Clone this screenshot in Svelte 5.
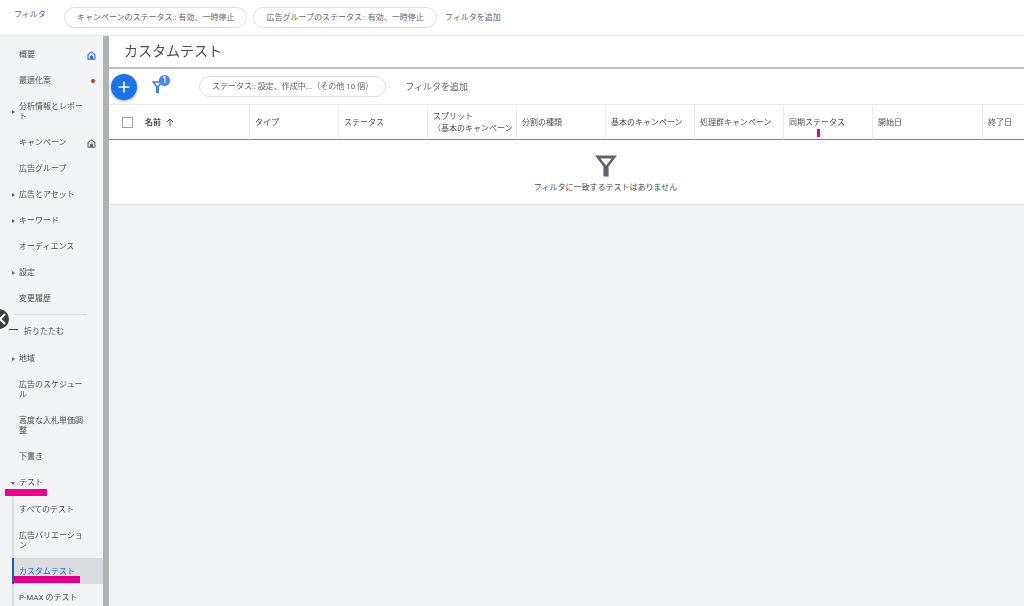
<script>
  const statusFilters = [
    'キャンペーンのステータス:: 有効、一時停止',
    '広告グループのステータス:: 有効、一時停止',
  ];

  const mainNav = [
    { label: '概要', icon: 'home', tone: 'blue' },
    { label: '最適化案', dot: true },
    { label: '分析情報とレポート', arrow: true },
    { label: 'キャンペーン', icon: 'home' },
    { label: '広告グループ' },
    { label: '広告とアセット', arrow: true },
    { label: 'キーワード', arrow: true },
    { label: 'オーディエンス' },
    { label: '設定', arrow: true },
    { label: '変更履歴' },
  ];

  const moreNav = [
    { label: '地域', arrow: true },
    { label: '広告のスケジュール' },
    { label: '高度な入札単価調整' },
    { label: '下書き' },
    { label: 'テスト', arrow: true, open: true, marked: true },
  ];

  const testNav = [
    { label: 'すべてのテスト' },
    { label: '広告バリエーション' },
    { label: 'カスタムテスト', active: true, marked: true },
    { label: 'P-MAX のテスト' },
  ];

  const columns = [
    { label: 'タイプ' },
    { label: 'ステータス' },
    { label: 'スプリット', sub: '（基本のキャンペーン' },
    { label: '分割の種類' },
    { label: '基本のキャンペーン' },
    { label: '処理群キャンペーン' },
    { label: '同期ステータス', marked: true },
    { label: '開始日', size: 'wide' },
    { label: '終了日', size: 'last' },
  ];

  let selectAll = $state(false);
</script>

{#snippet navItem(item)}
  <li>
    <a
      href="#top"
      class="nav-item"
      class:active={item.active}
      aria-current={item.active ? 'page' : undefined}
    >
      {#if item.arrow}
        <span class="arrow" class:open={item.open}></span>
      {/if}
      <span class="nav-label">{item.label}</span>
      {#if item.icon}
        <svg class="home {item.tone ?? ''}" viewBox="0 0 10 10" aria-hidden="true">
          <path d="M1.2 9.2V3.8L5 1l3.8 2.8v5.4z" fill="none" stroke="currentColor" stroke-width="1.2" stroke-linejoin="round" />
          <path d="M3.2 9V6.4a1.8 1.8 0 0 1 3.6 0V9z" fill="currentColor" />
        </svg>
      {/if}
      {#if item.dot}
        <span class="dot"></span>
      {/if}
      {#if item.marked}
        <span class="marker"></span>
      {/if}
    </a>
  </li>
{/snippet}

<div class="app">
  <header class="filter-bar">
    <span class="filter-title">フィルタ</span>
    {#each statusFilters as filter}
      <button class="chip">{filter}</button>
    {/each}
    <button class="add-filter">フィルタを追加</button>
  </header>

  <div class="body">
    <nav class="sidebar">
      <ul>
        {#each mainNav as item}
          {@render navItem(item)}
        {/each}
      </ul>
      <button class="fold"><span class="minus"></span>折りたたむ</button>
      <ul>
        {#each moreNav as item}
          {@render navItem(item)}
        {/each}
      </ul>
      <ul class="sub">
        {#each testNav as item}
          {@render navItem(item)}
        {/each}
      </ul>
      <button class="collapse" aria-label="メニューを閉じる">
        <svg viewBox="0 0 20 20" aria-hidden="true">
          <path d="M16 5l-5 5 5 5" fill="none" stroke="#fff" stroke-width="2" />
        </svg>
      </button>
    </nav>

    <main>
      <h1>カスタムテスト</h1>

      <div class="toolbar">
        <button class="fab" aria-label="作成">
          <svg viewBox="0 0 26 26" aria-hidden="true">
            <path d="M13 7.5v11M7.5 13h11" stroke="#fff" stroke-width="1.6" />
          </svg>
        </button>
        <button class="funnel-btn" aria-label="フィルタ">
          <svg viewBox="0 0 11 12" aria-hidden="true">
            <path d="M1.2 1h8.6L6.3 5.6v5.6H4.7V5.6z" fill="none" stroke="#3b78e7" stroke-width="1.4" />
          </svg>
          <span class="badge">1</span>
        </button>
        <button class="chip status-chip">ステータス:: 設定、作成中...（その他 10 個）</button>
        <button class="add-filter large">フィルタを追加</button>
      </div>

      <div class="table-wrap">
        <table>
          <thead>
            <tr>
              <th class="check">
                <input type="checkbox" aria-label="すべて選択" bind:checked={selectAll} />
              </th>
              <th class="name">
                名前
                <svg viewBox="0 0 8 8" aria-hidden="true">
                  <path d="M4 8V1M1 4l3-3 3 3" fill="none" stroke="currentColor" />
                </svg>
              </th>
              {#each columns as col}
                <th class={col.size}>
                  {col.label}
                  {#if col.sub}<span class="sub-label">{col.sub}</span>{/if}
                  {#if col.marked}<span class="tick"></span>{/if}
                </th>
              {/each}
            </tr>
          </thead>
          <tbody>
            <tr>
              <td colspan={columns.length + 2}>
                <svg viewBox="0 0 22 22" aria-hidden="true">
                  <path d="M2.6 1.8h16.8L12.3 11v9.2H9.7V11z" fill="#5f6368" stroke="#5f6368" stroke-width="2.6" />
                  <path d="M5.4 3.4h11.2L11 10.4z" fill="#fff" />
                </svg>
                <p>フィルタに一致するテストはありません</p>
              </td>
            </tr>
          </tbody>
        </table>
      </div>
    </main>
  </div>
</div>

<style>
  :global(body) {
    margin: 0;
    background: #f1f3f4;
  }
  .app {
    display: flex;
    flex-direction: column;
    height: 100vh;
    overflow: hidden;
    font: 8px/10px Roboto, 'Noto Sans CJK JP', sans-serif;
    color: #4a4d51;
  }
  button {
    font: inherit;
    color: inherit;
    padding: 0;
    border: 0;
    background: none;
    cursor: pointer;
    white-space: nowrap;
  }
  svg { display: block; }
  ul {
    list-style: none;
    margin: 0;
    padding: 0;
  }

  .filter-bar {
    display: flex;
    align-items: center;
    flex: none;
    height: 35px;
    padding-left: 14px;
    border-bottom: 1px solid #e4e6e8;
    background: #fff;
    color: #5f6368;
  }
  .filter-title {
    width: 50px;
    padding-bottom: 5px;
  }
  .chip {
    height: 21px;
    padding: 0 12px;
    margin-right: 6px;
    border: 1px solid #dadce0;
    border-radius: 11px;
    color: #5f6368;
  }
  .add-filter {
    margin-left: 2px;
    color: #5f6368;
  }
  .large { font-size: 9px; }

  .body {
    display: flex;
    flex: 1;
    min-height: 0;
  }

  .sidebar {
    position: relative;
    flex: none;
    box-sizing: border-box;
    width: 109px;
    padding-top: 5px;
    border-right: 6px solid #b0b2b4;
    overflow: hidden;
  }
  .nav-item {
    position: relative;
    display: flex;
    align-items: center;
    padding: 9px 0 7px 19px;
    color: #4a4d51;
    text-decoration: none;
  }
  .nav-label {
    width: 68px;
    word-break: break-all;
  }
  .arrow {
    position: absolute;
    left: 12px;
    border-left: 3px solid #5f6368;
    border-top: 2px solid transparent;
    border-bottom: 2px solid transparent;
  }
  .arrow.open {
    left: 11px;
    border-top: 3px solid #5f6368;
    border-left: 2px solid transparent;
    border-right: 2px solid transparent;
    border-bottom: 0;
  }
  .home {
    flex: none;
    width: 9px;
    height: 9px;
    color: #5f6368;
  }
  .home.blue { color: #2a6bd4; }
  .dot {
    width: 4px;
    height: 4px;
    margin-left: 4px;
    border-radius: 50%;
    background: #d93025;
  }
  .fold {
    display: flex;
    align-items: center;
    gap: 6px;
    width: 73px;
    height: 31px;
    margin: 3px 0 0 14px;
    padding-top: 3px;
    border-top: 1px solid #dadce0;
  }
  .minus {
    width: 9px;
    height: 1px;
    margin: 0 0 4px -5px;
    background: #3c4043;
  }
  .sub {
    margin-left: 12px;
    padding-top: 1px;
  }
  .sub .nav-item {
    padding-left: 5px;
    border-left: 2px solid #dadce0;
  }
  .sub .active {
    border-left-color: #185abc;
    background: #dadce0;
    color: #1967d2;
  }
  .marker {
    position: absolute;
    left: 5px;
    bottom: -1px;
    width: 42px;
    height: 7px;
    background: #ec008c;
  }
  .sub .marker {
    left: 0;
    bottom: 1px;
    width: 66px;
    background: #dc0087;
  }
  .collapse {
    position: absolute;
    top: 273px;
    left: -11px;
    width: 20px;
    height: 20px;
    border-radius: 50%;
    background: #3c4043;
  }

  main {
    flex: 1;
    min-width: 0;
  }
  h1 {
    margin: 0;
    padding: 5px 15px 6px;
    border-bottom: 2px solid #c0c2c4;
    background: #fff;
    font-size: 14px;
    font-weight: 400;
    line-height: 20px;
  }
  .toolbar {
    display: flex;
    align-items: center;
    height: 35px;
    padding-left: 2px;
    background: #fff;
  }
  .fab {
    width: 26px;
    height: 26px;
    border-radius: 50%;
    background: #1a73e8;
    box-shadow: 0 1px 3px rgba(60, 64, 67, 0.5);
  }
  .funnel-btn {
    position: relative;
    width: 11px;
    margin-left: 15px;
  }
  .badge {
    position: absolute;
    top: -6px;
    left: 7px;
    width: 11px;
    height: 11px;
    border-radius: 50%;
    background: #4285f4;
    color: #fff;
    font-size: 9px;
    font-weight: 500;
    line-height: 11px;
  }
  .status-chip {
    margin-left: 36px;
    margin-right: 17px;
  }

  .table-wrap {
    overflow-x: auto;
    scrollbar-width: none;
    background: #fff;
  }
  table {
    width: 993px;
    table-layout: fixed;
    border-collapse: separate;
    border-spacing: 0;
  }
  th {
    position: relative;
    box-sizing: border-box;
    width: 89px;
    height: 36px;
    padding: 1px 0 0 5px;
    border-top: 1px solid #e8eaed;
    border-bottom: 1px solid #80868b;
    border-right: 1px solid #e8eaed;
    font-weight: 400;
    line-height: 12px;
    text-align: left;
    white-space: nowrap;
  }
  th.check {
    width: 36px;
    padding-left: 13px;
    border-right: 0;
  }
  th.name {
    width: 105px;
    padding-left: 0;
    font-weight: 700;
  }
  th.wide { width: 110px; }
  th.last { width: 119px; }
  .name svg {
    display: inline-block;
    width: 8px;
    height: 8px;
    margin-left: 3px;
    vertical-align: middle;
  }
  input {
    display: block;
    appearance: none;
    width: 11px;
    height: 11px;
    margin: 0;
    border: 1px solid #9aa0a6;
  }
  input:checked { background: #1a73e8; }
  .sub-label { display: block; }
  .tick {
    position: absolute;
    left: 33px;
    bottom: 2px;
    width: 3px;
    height: 8px;
    background: #ec008c;
  }
  td {
    padding: 15px 0 11px;
    border-bottom: 1px solid #e0e2e4;
    text-align: center;
  }
  td svg {
    width: 22px;
    height: 22px;
    margin: 0 auto;
  }
  p { margin: 6px 0 0; }
</style>
